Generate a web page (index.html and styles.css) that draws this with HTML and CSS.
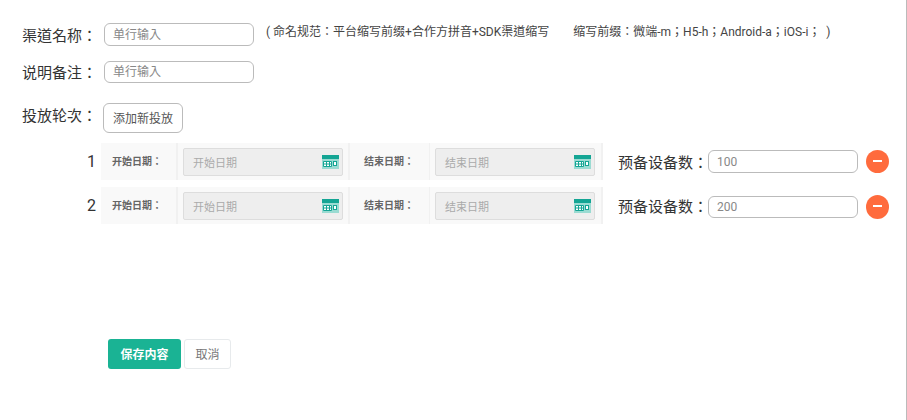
FILE: index.html
```html
<!DOCTYPE html>
<html lang="zh-TW">
<head>
<meta charset="utf-8">
<title>渠道</title>
<link rel="stylesheet" href="styles.css">
</head>
<body>
<div class="page">
  <div class="row row-name">
    <label class="label">渠道名称：</label>
    <input class="text-input" placeholder="单行输入">
    <span class="hint">( 命名规范：平台缩写前缀+合作方拼音+SDK渠道缩写<span class="hint-gap">缩写前缀：微端-m；H5-h；Android-a；iOS-i；  )</span></span>
  </div>
  <div class="row row-note">
    <label class="label">说明备注：</label>
    <input class="text-input short" placeholder="单行输入">
  </div>
  <div class="row row-rounds">
    <label class="label">投放轮次：</label>
    <button class="add-btn" type="button">添加新投放</button>
  </div>
  <div class="rounds">
    <div class="round">
      <span class="num">1</span>
      <div class="dates">
        <span class="cell-label">开始日期：</span>
        <span class="cell-input"><span class="date"><span>开始日期</span><svg class="cal" viewBox="0 0 17 14"><rect width="17" height="14" fill="#9adbd2"/><rect width="17" height="4" fill="#14a594"/><path d="M1.500 6.500h8v5h-8zM4.500 6.500v5M7.500 6.500v5M1.500 9h8" fill="#fff" stroke="#14a594"/><rect x="11.500" y="6.500" width="3" height="4" fill="#fff" stroke="#14a594"/></svg></span></span>
        <span class="cell-label end">结束日期：</span>
        <span class="cell-input end"><span class="date"><span>结束日期</span><svg class="cal" viewBox="0 0 17 14"><rect width="17" height="14" fill="#9adbd2"/><rect width="17" height="4" fill="#14a594"/><path d="M1.500 6.500h8v5h-8zM4.500 6.500v5M7.500 6.500v5M1.500 9h8" fill="#fff" stroke="#14a594"/><rect x="11.500" y="6.500" width="3" height="4" fill="#fff" stroke="#14a594"/></svg></span></span>
      </div>
      <label class="count-label">预备设备数：</label>
      <input class="text-input count" value="100">
      <button class="minus" type="button" aria-label="删除"></button>
    </div>
    <div class="round round-low">
      <span class="num">2</span>
      <div class="dates">
        <span class="cell-label">开始日期：</span>
        <span class="cell-input"><span class="date"><span>开始日期</span><svg class="cal" viewBox="0 0 17 14"><rect width="17" height="14" fill="#9adbd2"/><rect width="17" height="4" fill="#14a594"/><path d="M1.500 6.500h8v5h-8zM4.500 6.500v5M7.500 6.500v5M1.500 9h8" fill="#fff" stroke="#14a594"/><rect x="11.500" y="6.500" width="3" height="4" fill="#fff" stroke="#14a594"/></svg></span></span>
        <span class="cell-label end">结束日期：</span>
        <span class="cell-input end"><span class="date"><span>结束日期</span><svg class="cal" viewBox="0 0 17 14"><rect width="17" height="14" fill="#9adbd2"/><rect width="17" height="4" fill="#14a594"/><path d="M1.500 6.500h8v5h-8zM4.500 6.500v5M7.500 6.500v5M1.500 9h8" fill="#fff" stroke="#14a594"/><rect x="11.500" y="6.500" width="3" height="4" fill="#fff" stroke="#14a594"/></svg></span></span>
      </div>
      <label class="count-label">预备设备数：</label>
      <input class="text-input count" value="200">
      <button class="minus" type="button" aria-label="删除"></button>
    </div>
  </div>
  <div class="actions">
    <button class="save" type="button">保存内容</button>
    <button class="cancel" type="button">取消</button>
  </div>
</div>
</body>
</html>
```
FILE: styles.css
```css
* { box-sizing: border-box; }
html, body { margin: 0; padding: 0; background: #fff; }
body {
  height: 420px;
  overflow: hidden;
  font-family: Roboto, "Noto Sans CJK TC", sans-serif;
  color: #333;
}
.page {
  height: 420px;
  padding: 23px 0 0 22px;
  border-right: 1px solid #bbb;
}
.row { display: flex; align-items: center; }
.label { width: 82px; flex: none; height: 22px; font-size: 15px; line-height: 24px; color: #333; white-space: nowrap; }
.text-input {
  width: 150px;
  border: 1px solid #bbb;
  border-radius: 6px;
  padding: 0 8px;
  font: 12px Roboto, "Noto Sans CJK TC", sans-serif;
  color: #888;
  background: #fff;
  outline: none;
}
.text-input::placeholder { color: #888; opacity: 1; }
.row-name .text-input { height: 23px; }
.row-note { margin-top: 15px; }
.short { height: 22px; }
.hint { margin: -5px 0 0 12px; font-size: 12px; line-height: 16px; color: #444; white-space: pre; }
.hint-gap { margin-left: 24px; }
.row-rounds { margin-top: 20px; }
.row-rounds .label { margin-top: -6px; }
.add-btn {
  margin-left: -1px;
  width: 80px;
  height: 30px;
  padding: 0 0 2px;
  background: #fff;
  border: 1px solid #bbb;
  border-radius: 6px;
  font: 12px Roboto, "Noto Sans CJK TC", sans-serif;
  color: #555;
}
.rounds { margin: 10px 0 0 61px; }
.round { display: flex; align-items: center; height: 37px; margin-bottom: 7px; }
.num { width: 18px; flex: none; padding-right: 5px; text-align: right; font-size: 16px; color: #333; }
.dates {
  display: flex;
  width: 502px;
  height: 37px;
  background: #f9f9f9;
}
.cell-label {
  width: 75px;
  padding-left: 11px;
  font-size: 10px;
  font-weight: 700;
  line-height: 37px;
  color: #666;
  white-space: nowrap;
}
.cell-label.end { width: 79px; padding-left: 14px; }
.cell-input {
  width: 174px;
  padding: 5px;
  border-left: 2px solid #f1f1f1;
  border-right: 2px solid #f1f1f1;
}
.cell-input.end { padding: 5px 6px 5px 5px; border-left-width: 1px; }
.date {
  display: flex;
  align-items: center;
  justify-content: space-between;
  height: 28px;
  padding: 0 3px 0 9px;
  background: #eee;
  border: 1px solid #ddd;
  border-radius: 2px;
  font-size: 11px;
  color: #aaa;
}
.cal { width: 17px; height: 14px; }
.count-label { margin-left: 15px; font-size: 15px; color: #333; white-space: nowrap; width: 90px; flex: none; }
.count { height: 23px; }
.minus {
  position: relative;
  width: 23px;
  height: 23px;
  margin-left: 8px;
  padding: 0;
  border: 0;
  border-radius: 50%;
  background: #ff6b3d;
}
.minus::after {
  content: "";
  position: absolute;
  left: 7px;
  top: 10px;
  width: 9px;
  height: 2px;
  background: #fff;
}
.round-low .count { height: 22px; margin-top: 3px; }
.round-low .minus { height: 24px; margin-top: 3px; }
.actions { display: flex; gap: 3px; margin: 115px 0 0 86px; }
.save {
  width: 73px;
  height: 30px;
  padding: 0 0 2px;
  border: 0;
  border-radius: 3px;
  background: #1ab394;
  color: #fff;
  font: 700 12px Roboto, "Noto Sans CJK TC", sans-serif;
}
.cancel {
  width: 47px;
  height: 30px;
  padding: 0 0 2px;
  background: #fff;
  border: 1px solid #e7eaec;
  border-radius: 3px;
  color: #777;
  font: 12px Roboto, "Noto Sans CJK TC", sans-serif;
}
```
